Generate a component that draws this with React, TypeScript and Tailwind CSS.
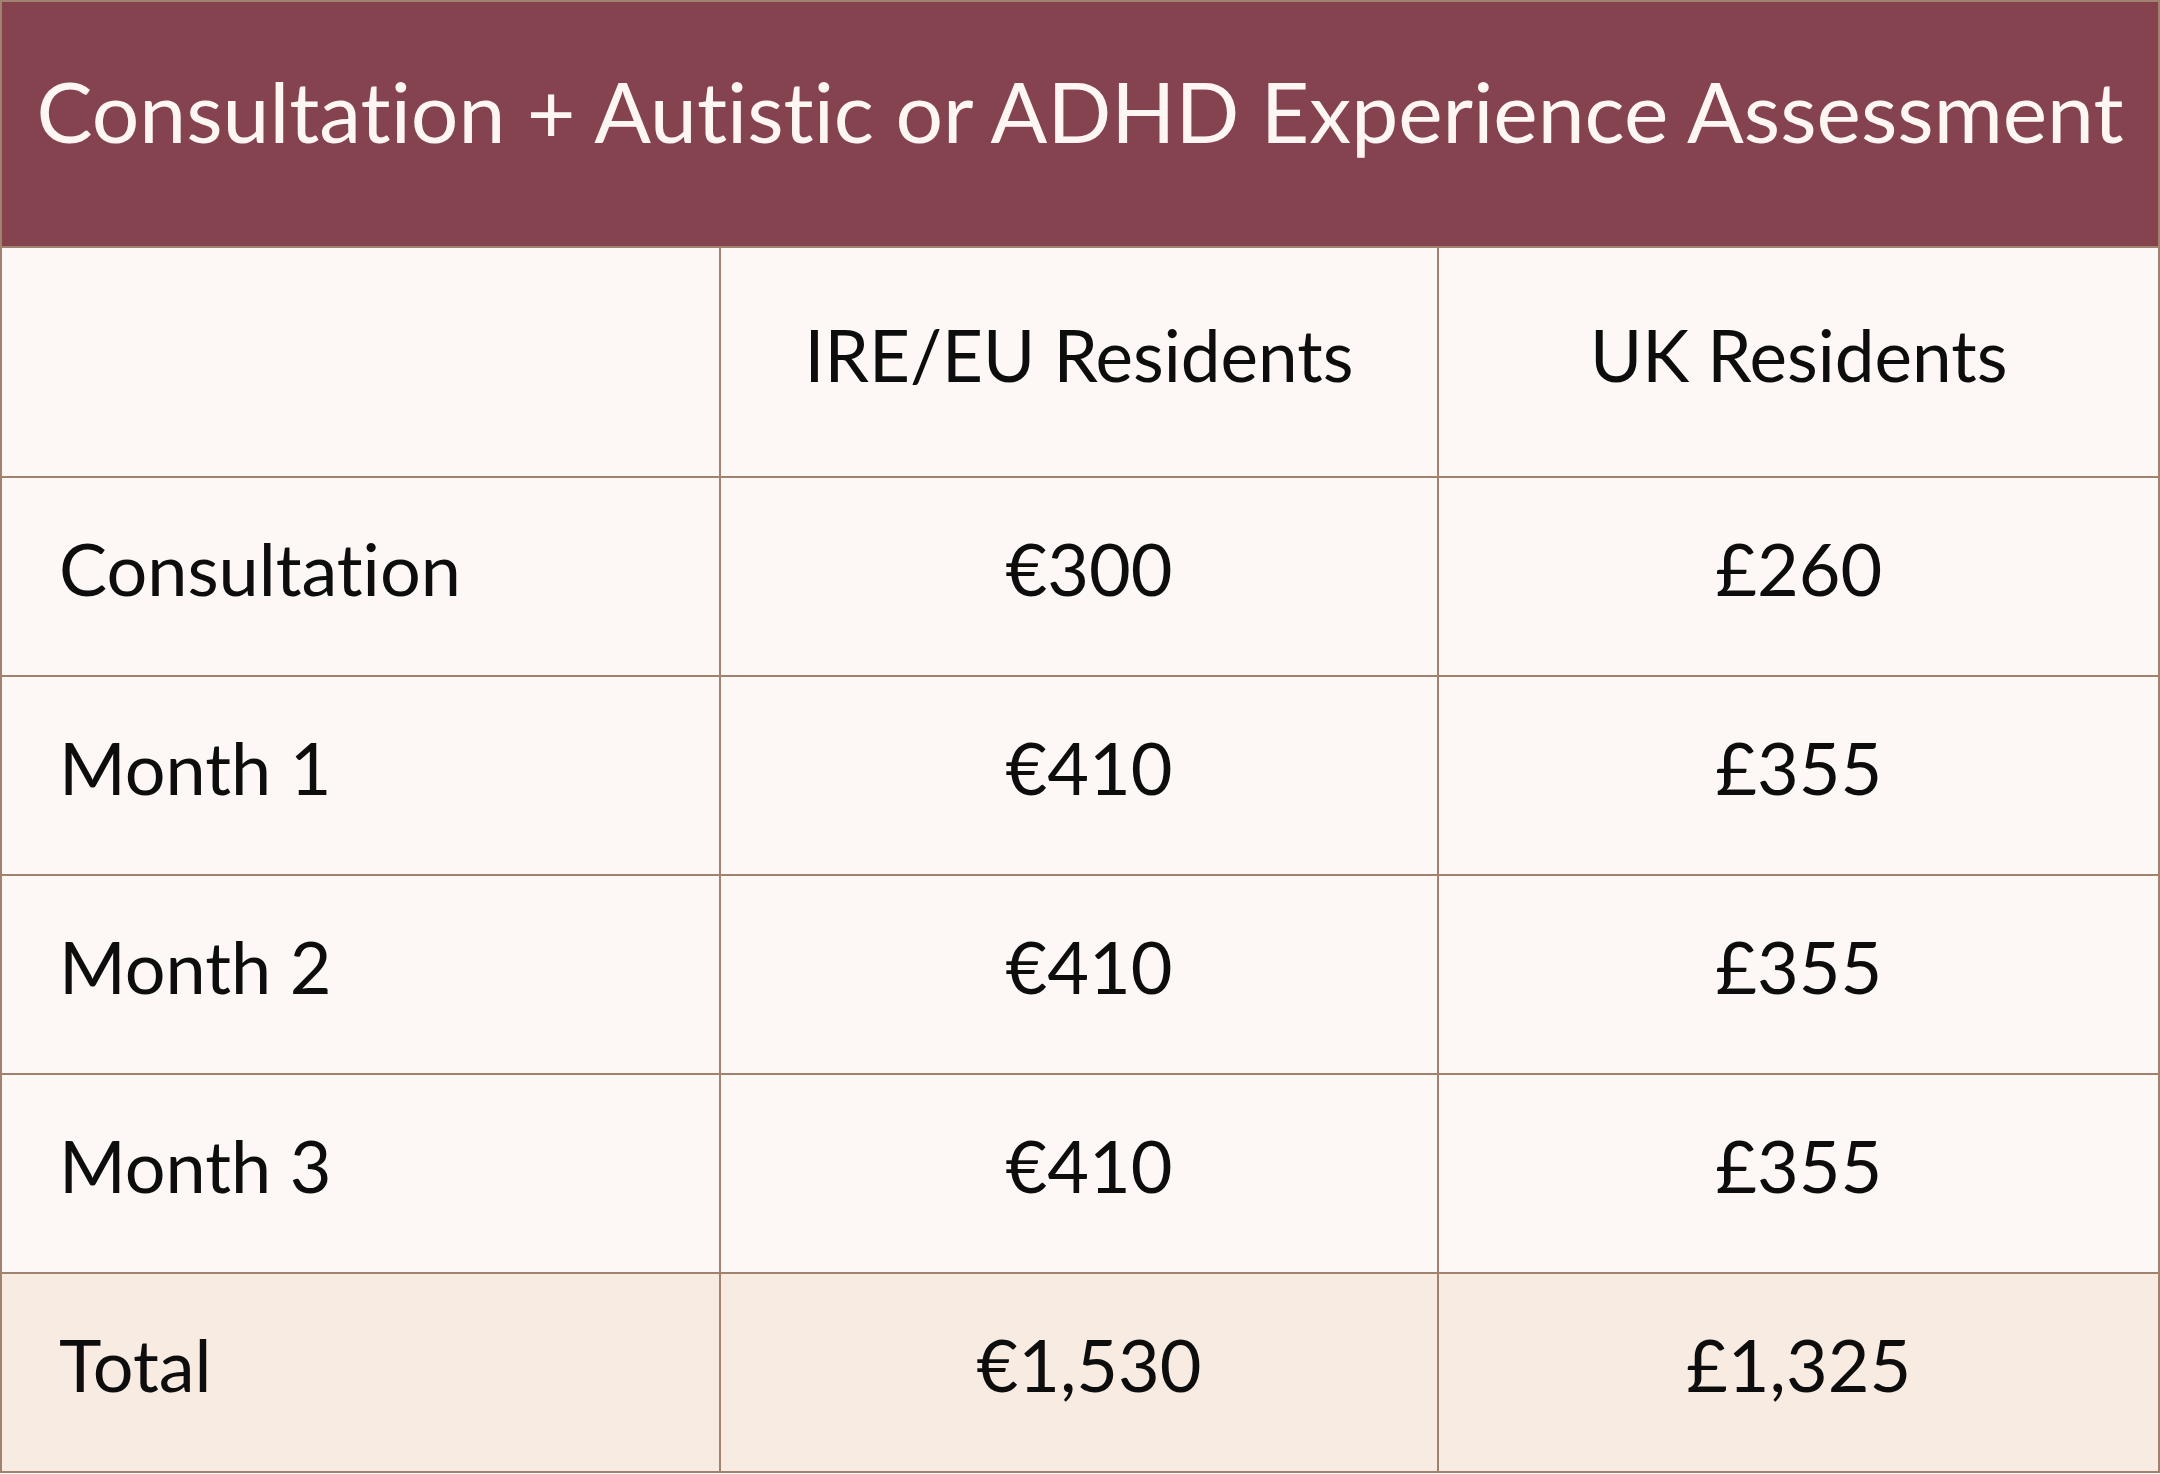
import React from "react";

const rows = [
  { label: "Consultation", eu: "€300", uk: "£260" },
  { label: "Month 1", eu: "€410", uk: "£355" },
  { label: "Month 2", eu: "€410", uk: "£355" },
  { label: "Month 3", eu: "€410", uk: "£355" },
];

export default function App() {
  return (
    <div className="w-[2160px] h-[1474px] bg-white">
      <div
        className="w-[2160px] h-[1473px] flex flex-col border-2 border-[#a0826f] bg-[#fdf8f5] text-[#0d0d0d] [font-variant-ligatures:none]"
        style={{ fontFamily: "Lato, 'Noto Sans', sans-serif" }}
      >
        <div className="h-[246px] shrink-0 bg-[#84434f] border-b-2 border-[#a0826f] flex items-center justify-center pb-[26px]">
          <h1 className="text-[#fdf6f2] text-[84px] leading-none font-normal whitespace-nowrap">
            Consultation + Autistic or ADHD Experience Assessment
          </h1>
        </div>
        <div className="grid grid-cols-3 h-[230px] shrink-0 border-b-2 border-[#a0826f]">
          <div className="border-r-2 border-[#a0826f]" />
          <div className="border-r-2 border-[#a0826f] flex items-center justify-center pb-[16px] text-[71px] leading-none whitespace-nowrap">
            IRE/EU Residents
          </div>
          <div className="flex items-center justify-center pb-[16px] text-[71px] leading-none whitespace-nowrap">
            UK Residents
          </div>
        </div>
        {rows.map((r) => (
          <div key={r.label} className="grid grid-cols-3 h-[199px] shrink-0 border-b-2 border-[#a0826f] text-[72px] leading-none">
            <div className="border-r-2 border-[#a0826f] flex items-center pl-[57px] pb-[18px]">{r.label}</div>
            <div className="border-r-2 border-[#a0826f] flex items-center justify-center pb-[18px] pl-[20px]">{r.eu}</div>
            <div className="flex items-center justify-center pb-[18px]">{r.uk}</div>
          </div>
        ))}
        <div className="grid grid-cols-3 flex-1 bg-[#f7ebe2] text-[72px] leading-none">
          <div className="border-r-2 border-[#a0826f] flex items-center pl-[57px] pb-[18px]">Total</div>
          <div className="border-r-2 border-[#a0826f] flex items-center justify-center pb-[18px] pl-[20px]">€1,530</div>
          <div className="flex items-center justify-center pb-[18px]">£1,325</div>
        </div>
      </div>
    </div>
  );
}
